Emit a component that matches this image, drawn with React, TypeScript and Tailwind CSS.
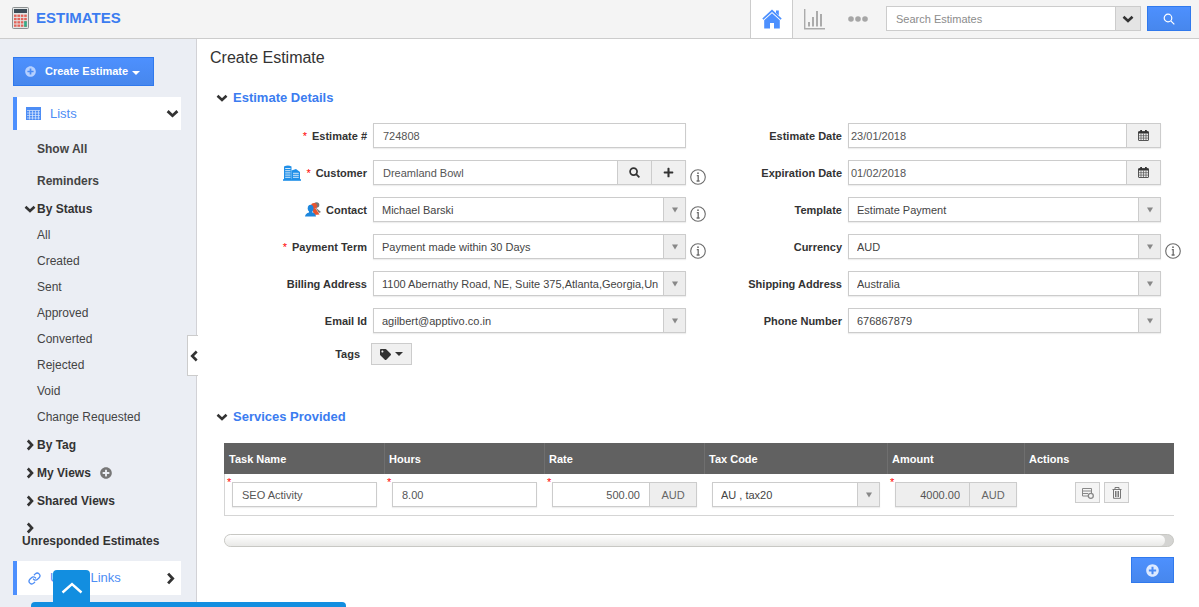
import type { ReactNode } from "react";
import { Link } from "lucide-react";
import { FaPlus, FaPlusCircle, FaTag } from "react-icons/fa";

type Direction = "up" | "down" | "left" | "right";

const CHEVRON_PATHS: Record<Direction, string> = {
  up: "M2 8 L6 4 L10 8",
  down: "M1.5 3.8 L6 8 L10.5 3.8",
  left: "M8.2 1.5 L4 6 L8.2 10.5",
  right: "M3.8 1.5 L8 6 L3.8 10.5",
};

const STATUSES = ["All", "Created", "Sent", "Approved", "Converted", "Rejected", "Void", "Change Requested"];

const BLUE_BUTTON = "border border-[#3079ed] bg-linear-to-b from-[#4d90fe] to-[#4787ed] text-white";

function Chevron({ dir, className = "size-3" }: { dir: Direction; className?: string }) {
  return (
    <svg viewBox="0 0 12 12" className={`shrink-0 ${className}`} fill="none" stroke="currentColor" strokeWidth="2.6">
      <path d={CHEVRON_PATHS[dir]} />
    </svg>
  );
}

function Caret({ className = "" }: { className?: string }) {
  return (
    <svg viewBox="0 0 8 4" className={`h-1 w-2 shrink-0 ${className}`} fill="currentColor">
      <path d="M0 0 H8 L4 4 Z" />
    </svg>
  );
}

function SearchIcon({ className, width }: { className: string; width: number }) {
  return (
    <svg viewBox="0 0 12 12" className={className} fill="none" stroke="currentColor" strokeWidth={width}>
      <circle cx="5" cy="5" r="3.8" />
      <path d="M7.8 7.8 L11.3 11.3" />
    </svg>
  );
}

function CalculatorIcon() {
  const cells = [0, 1, 2, 3];
  return (
    <svg viewBox="0 0 17 22" className="h-[22px] w-[17px]">
      <rect x="0.5" y="0.5" width="16" height="21" rx="1" fill="#e3e6e6" stroke="#8b8f90" />
      <rect x="2" y="2" width="13" height="4" fill="#3c4c57" />
      {cells.map((row) =>
        cells.map((col) => (
          <rect
            key={`${row}-${col}`}
            x={2 + col * 3.4}
            y={7.6 + row * 3.3}
            width="2.6"
            height="2.3"
            fill="#e2645a"
          />
        )),
      )}
      <rect x="12.2" y="14.2" width="2.6" height="5.6" fill="#2fb08a" />
    </svg>
  );
}

function HomeIcon() {
  return (
    <svg viewBox="0 0 20 20" className="size-5" fill="#4d90fe">
      <path d="M14 1.5 h2.8 v5 l-2.8 -2.6 z" />
      <path d="M10 0.6 L0.3 9.6 L1.4 10.7 L10 2.9 L18.6 10.7 L19.7 9.6 Z" />
      <path d="M10 4.2 L2.2 11.3 V19.4 H8 V14 H12 V19.4 H17.8 V11.3 Z" />
    </svg>
  );
}

function ChartIcon() {
  return (
    <svg viewBox="0 0 22 21" className="h-[21px] w-[22px]" fill="#ababab">
      <path d="M0 0 H1.4 V19 H21 V20.4 H0 Z" />
      <rect x="4" y="13" width="2" height="4.5" />
      <rect x="8" y="8" width="2" height="9.5" />
      <rect x="12" y="2" width="2" height="15.5" />
      <rect x="16" y="5" width="2" height="12.5" />
    </svg>
  );
}

function ListIcon() {
  return (
    <svg viewBox="0 0 15 13" className="h-[13px] w-[15px] shrink-0">
      <rect width="15" height="13" fill="#4d8df5" />
      <path
        d="M1 3.5H14M1 6H14M1 8.5H14M1 11H14M3.5 3.5V12.5M6.5 3.5V12.5M9.5 3.5V12.5M12.5 3.5V12.5"
        stroke="#dbe8fd"
        strokeWidth="0.7"
      />
    </svg>
  );
}

function CalendarIcon() {
  return (
    <svg viewBox="0 0 11 11" className="size-[11px]">
      <path d="M0.5 2 H10.5 V10 Q10.5 10.5 10 10.5 H1 Q0.5 10.5 0.5 10 Z" fill="#eee" stroke="#444" strokeWidth="0.9" />
      <path d="M0.5 1.2 H10.5 V3.5 H0.5 Z" fill="#333" />
      <path d="M2.2 0 H4 V2 H2.2 Z M7 0 H8.8 V2 H7 Z" fill="#333" />
      <path d="M0.5 5.7H10.5M0.5 8.1H10.5M3 3.5V10.5M5.5 3.5V10.5M8 3.5V10.5" stroke="#555" strokeWidth="0.7" />
    </svg>
  );
}

function BuildingIcon() {
  return (
    <svg viewBox="0 0 18 16" className="h-4 w-[18px]">
      <path d="M1 1.5 Q5 -0.5 8.5 1.5 V15 H1 Z" fill="#1f8fe8" />
      <path d="M8.5 5.5 L13 4 L17 7 V15 H8.5 Z" fill="#1f8fe8" />
      <path d="M0 15 H18" stroke="#1f8fe8" strokeWidth="1.6" />
      <path
        d="M2.2 3.5H7.5M2.2 5.7H7.5M2.2 7.9H7.5M2.2 10.1H7.5M2.2 12.3H7.5M10 8.3H15.8M10 10.3H15.8M10 12.3H15.8"
        stroke="#fff"
        strokeWidth="0.8"
      />
    </svg>
  );
}

function ContactIcon() {
  return (
    <svg viewBox="0 0 16 15" className="h-[15px] w-4">
      <circle cx="11.5" cy="3" r="2.8" fill="#777" />
      <path d="M10 5 L16 10 L14 11 Z" fill="#777" />
      <circle cx="9" cy="4" r="3" fill="#e8542f" />
      <path d="M7 6 L11 7 L14.5 12.5 L9 13 Z" fill="#e8542f" />
      <ellipse cx="5.6" cy="6.3" rx="2.9" ry="3.5" fill="#1c86dd" />
      <path d="M0 14.5 Q0.5 11.4 4 10.6 V9 H7.4 V10.6 Q10.6 11.4 11 14.5 Z" fill="#1c86dd" />
    </svg>
  );
}

function InfoButton({ about }: { about: string }) {
  return (
    <button type="button" aria-label={`About ${about}`} className="shrink-0">
      <svg viewBox="0 0 16 16" className="size-4" fill="none" stroke="#6b6b6b">
        <circle cx="8" cy="8" r="7.3" strokeWidth="1.1" />
        <path d="M6.8 6.7 H8.2 V12 M6.6 12 H9.6" strokeWidth="1.3" />
        <circle cx="8" cy="4.2" r="0.9" fill="#6b6b6b" stroke="none" />
      </svg>
    </button>
  );
}

interface FieldProps {
  id: string;
  label: string;
  required?: boolean;
  info?: boolean;
  icon?: ReactNode;
  children: ReactNode;
}

function Field({ id, label, required, info, icon, children }: FieldProps) {
  return (
    <div className="flex h-[25px] items-end">
      <div className="flex w-[136px] shrink-0 items-center justify-end gap-[5px] self-center whitespace-nowrap">
        {icon}
        {required && <span className="text-[11px] leading-4 text-[#f00]">*</span>}
        <label htmlFor={id} className="font-bold text-[#333]">
          {label}
        </label>
      </div>
      <div className="ml-1.5 mr-1 flex h-[25px] min-w-0 flex-1 border border-[#ccc] bg-white shadow-[0_1px_1px_#eee]">
        {children}
      </div>
      <div className="flex w-4 shrink-0">{info && <InfoButton about={label} />}</div>
    </div>
  );
}

function SelectBox({ id, value, label }: { id: string; value: string; label?: string }) {
  return (
    <div className="relative flex min-w-0 flex-1">
      <select
        id={id}
        aria-label={label}
        className="w-full min-w-0 appearance-none bg-transparent pl-2 pr-[22px] text-[#444] outline-none"
      >
        <option>{value}</option>
      </select>
      <span className="pointer-events-none absolute inset-y-0 right-0 flex w-[22px] items-center justify-center border-l border-[#ccc] bg-[#ededed]">
        <svg viewBox="0 0 6 6" className="size-1.5" fill="#888">
          <path d="M0 0.5 H6 L3 5.5 Z" />
        </svg>
      </span>
    </div>
  );
}

function TextInput({ id, value, className = "pl-[9px]" }: { id: string; value: string; className?: string }) {
  return (
    <input id={id} defaultValue={value} className={`w-full min-w-0 flex-1 text-[#555] outline-none ${className}`} />
  );
}

function AddonButton({ label, children }: { label: string; children: ReactNode }) {
  return (
    <button
      type="button"
      aria-label={label}
      className="flex w-[34px] shrink-0 items-center justify-center border-l border-[#ccc] bg-[#f0f0f0] text-[#333]"
    >
      {children}
    </button>
  );
}

function SectionHeading({ children }: { children: ReactNode }) {
  return (
    <h2 className="flex h-5 items-center gap-[5px] pl-[19px] text-[13px] font-bold text-[#3b7cf0]">
      <Chevron dir="down" className="size-3 text-[#333]" />
      {children}
    </h2>
  );
}

function Header() {
  return (
    <header className="flex h-[39px] items-start justify-between border-b border-[#ccc] bg-[#f4f4f4]">
      <div className="flex h-9 items-center gap-[7px] pl-3">
        <CalculatorIcon />
        <h1 className="text-[15px] font-bold text-[#3b7cf0]">ESTIMATES</h1>
      </div>
      <div className="flex h-full items-center pr-2">
        <a href="#home" aria-label="Home" className="flex h-full w-[43px] items-center justify-center border-x border-[#ccc] bg-white">
          <HomeIcon />
        </a>
        <a href="#reports" aria-label="Reports" className="ml-[11px]">
          <ChartIcon />
        </a>
        <button type="button" aria-label="More" className="ml-[22px] mr-[18px]">
          <svg viewBox="0 0 20 6" className="h-1.5 w-5" fill="#a6a6a6">
            <circle cx="3" cy="3" r="2.8" />
            <circle cx="10" cy="3" r="2.8" />
            <circle cx="17" cy="3" r="2.8" />
          </svg>
        </button>
        <form className="mt-1.5 flex h-[25px] self-start">
          <input
            aria-label="Search Estimates"
            placeholder="Search Estimates"
            className="w-[230px] border border-[#ccc] bg-white pl-[9px] outline-none placeholder:text-[#8c8c8c]"
          />
          <button
            type="button"
            aria-label="Search options"
            className="mr-1.5 flex w-[25px] items-center justify-center border border-l-0 border-[#ccc] bg-[#e4e4e4] text-[#333]"
          >
            <Chevron dir="down" />
          </button>
          <button type="submit" aria-label="Search" className={`flex w-11 items-center justify-center ${BLUE_BUTTON}`}>
            <SearchIcon className="size-3" width={1.2} />
          </button>
        </form>
      </div>
    </header>
  );
}

function TreeGroup({ label, dir = "right" }: { label: string; dir?: Direction }) {
  return (
    <a href="#group" className="flex h-7 items-center font-bold text-[#333]">
      <Chevron dir={dir} className="mr-px size-3" />
      {label}
    </a>
  );
}

function Sidebar() {
  return (
    <aside className="relative w-[197px] shrink-0 border-r border-[#d2d2d6] bg-[#ebeef4] pb-3 pl-[13px] pt-[18px] text-xs">
      <button type="button" className={`flex h-[29px] w-[141px] items-center text-[11px] font-bold ${BLUE_BUTTON}`}>
        <FaPlusCircle className="ml-[11px] mr-[9px] size-[11px] text-[#b5d0ff]" />
        Create Estimate
        <Caret className="ml-1 mt-0.5" />
      </button>

      <a
        href="#lists"
        className="mt-[11px] flex h-[33px] w-[168px] items-center border-l-4 border-[#4d90fe] bg-white pl-[9px] pr-0.5 text-[13px] text-[#4d8df5]"
      >
        <ListIcon />
        <span className="ml-[9px] flex-1">Lists</span>
        <Chevron dir="down" className="size-[13px] text-[#333]" />
      </a>

      <nav className="pl-[11px]">
        <a href="#all" className="mt-[3px] flex h-8 items-center pl-[13px] font-bold text-[#444]">
          Show All
        </a>
        <a href="#reminders" className="flex h-8 items-center pl-[13px] font-bold text-[#444]">
          Reminders
        </a>
        <div className="-mt-0.5">
          <TreeGroup label="By Status" dir="down" />
        </div>
        <ul className="-mt-px">
          {STATUSES.map((status) => (
            <li key={status}>
              <a href="#status" className="flex h-[26px] items-center pl-[13px] text-[#444]">
                {status}
              </a>
            </li>
          ))}
        </ul>
        <div className="mt-px">
          <TreeGroup label="By Tag" />
          <div className="flex items-center gap-[9px]">
            <TreeGroup label="My Views" />
            <button type="button" aria-label="Add view">
              <FaPlusCircle className="size-3 text-[#777]" />
            </button>
          </div>
          <TreeGroup label="Shared Views" />
        </div>
        <a href="#unresponded" className="-ml-0.5 mt-[7px] block font-bold leading-[14px] text-[#333]">
          <Chevron dir="right" className="ml-0.5 size-3" />
          Unresponded Estimates
        </a>
      </nav>

      <a
        href="#links"
        className="mt-[13px] flex h-[34px] w-[168px] items-center border-l-4 border-[#4d90fe] bg-white pl-[11px] pr-1 text-[13px] text-[#4d8df5]"
      >
        <Link className="size-[13px]" strokeWidth={2.4} />
        <span className="ml-[9px] flex-1">Useful Links</span>
        <Chevron dir="right" className="size-[13px] text-[#333]" />
      </a>

      <button
        type="button"
        aria-label="Collapse sidebar"
        className="absolute -right-0.5 top-[296px] flex h-[41px] w-[11px] items-center justify-end border border-r-0 border-[#ccc] bg-white text-[#333]"
      >
        <svg viewBox="0 0 8 12" className="h-3 w-2" fill="none" stroke="currentColor" strokeWidth="2.6">
          <path d="M6.7 1.5 L2.2 6 L6.7 10.5" />
        </svg>
      </button>
    </aside>
  );
}

function EstimateForm() {
  return (
    <div className="mt-[15px] grid grid-cols-2 pl-[21px]">
      <div className="flex flex-col gap-3">
        <Field id="number" label="Estimate #" required>
          <TextInput id="number" value="724808" />
        </Field>
        <Field id="customer" label="Customer" required info icon={<BuildingIcon />}>
          <TextInput id="customer" value="Dreamland Bowl" />
          <AddonButton label="Find customer">
            <SearchIcon className="size-[11px]" width={1.9} />
          </AddonButton>
          <AddonButton label="Add customer">
            <FaPlus className="size-[11px]" />
          </AddonButton>
        </Field>
        <Field id="contact" label="Contact" info icon={<ContactIcon />}>
          <SelectBox id="contact" value="Michael Barski" />
        </Field>
        <Field id="term" label="Payment Term" required info>
          <SelectBox id="term" value="Payment made within 30 Days" />
        </Field>
        <Field id="billing" label="Billing Address">
          <SelectBox id="billing" value="1100 Abernathy Road, NE, Suite 375,Atlanta,Georgia,Un" />
        </Field>
        <Field id="email" label="Email Id">
          <SelectBox id="email" value="agilbert@apptivo.co.in" />
        </Field>
        <div className="-mt-0.5 flex h-[22px] items-center">
          <label htmlFor="tags" className="w-[129px] text-right font-bold text-[#333]">
            Tags
          </label>
          <button
            id="tags"
            type="button"
            className="ml-[11px] flex h-[22px] w-[41px] items-center justify-center gap-1 border border-[#ccc] bg-[#f0f0f0] text-[#333]"
          >
            <FaTag className="size-[11px]" />
            <Caret />
          </button>
        </div>
      </div>

      <div className="flex flex-col gap-3">
        <Field id="date" label="Estimate Date">
          <TextInput id="date" value="23/01/2018" className="pl-0.5" />
          <AddonButton label="Pick estimate date">
            <CalendarIcon />
          </AddonButton>
        </Field>
        <Field id="expiry" label="Expiration Date">
          <TextInput id="expiry" value="01/02/2018" className="pl-0.5" />
          <AddonButton label="Pick expiration date">
            <CalendarIcon />
          </AddonButton>
        </Field>
        <Field id="template" label="Template">
          <SelectBox id="template" value="Estimate Payment" />
        </Field>
        <Field id="currency" label="Currency" info>
          <SelectBox id="currency" value="AUD" />
        </Field>
        <Field id="shipping" label="Shipping Address">
          <SelectBox id="shipping" value="Australia" />
        </Field>
        <Field id="phone" label="Phone Number">
          <SelectBox id="phone" value="676867879" />
        </Field>
      </div>
    </div>
  );
}

function ServiceCell({ label, required, children }: { label: string; required?: boolean; children: ReactNode }) {
  return (
    <td className="relative h-[41px] py-0 pl-2 pr-[7px]">
      {required && <span className="absolute left-[3px] top-0.5 leading-3 text-[#f00]">*</span>}
      <div role="group" aria-label={label} className="flex h-[25px] border border-[#ccc] shadow-[0_1px_1px_#eee]">
        {children}
      </div>
    </td>
  );
}

function CurrencySuffix() {
  return (
    <span className="flex w-[47px] shrink-0 items-center justify-center border-l border-[#ccc] bg-[#eee] text-[#666]">
      AUD
    </span>
  );
}

function RowAction({ label, children }: { label: string; children: ReactNode }) {
  return (
    <button
      type="button"
      aria-label={label}
      className="flex h-[21px] w-[25px] items-center justify-center border border-[#ccc] bg-[#f4f4f4]"
    >
      {children}
    </button>
  );
}

function ServicesTable() {
  const inputClass = "w-full min-w-0 flex-1 text-[#555] outline-none";
  return (
    <table className="w-full table-fixed border-separate border-spacing-0 border-b border-[#d5d5d5]">
      <thead>
        <tr className="h-[31px] bg-[#616161] text-left font-bold text-white">
          <th className="w-[160px] pl-[5px]">Task Name</th>
          <th className="w-[160px] border-l border-[#6f6f6f] pl-1">Hours</th>
          <th className="w-[160px] border-l border-[#6f6f6f] pl-1">Rate</th>
          <th className="w-[183px] border-l border-[#6f6f6f] pl-1">Tax Code</th>
          <th className="w-[137px] border-l border-[#6f6f6f] pl-1">Amount</th>
          <th className="border-l border-[#6f6f6f] pl-1">Actions</th>
        </tr>
      </thead>
      <tbody className="shadow-[inset_1px_0_0_#d5d5d5]">
        <tr>
          <ServiceCell label="Task Name" required>
            <input aria-label="Task Name" defaultValue="SEO Activity" className={`pl-[9px] ${inputClass}`} />
          </ServiceCell>
          <ServiceCell label="Hours" required>
            <input aria-label="Hours" defaultValue="8.00" className={`pl-[9px] ${inputClass}`} />
          </ServiceCell>
          <ServiceCell label="Rate" required>
            <input aria-label="Rate" defaultValue="500.00" className={`pr-[9px] text-right ${inputClass}`} />
            <CurrencySuffix />
          </ServiceCell>
          <ServiceCell label="Tax Code">
            <SelectBox id="tax" label="Tax Code" value="AU , tax20" />
          </ServiceCell>
          <ServiceCell label="Amount" required>
            <input
              aria-label="Amount"
              readOnly
              value="4000.00"
              className={`bg-[#eee] pr-[9px] text-right ${inputClass}`}
            />
            <CurrencySuffix />
          </ServiceCell>
          <td>
            <div className="-mt-1 flex justify-center gap-1 pl-1.5">
              <RowAction label="Add line">
                <svg viewBox="0 0 12 12" className="size-3" fill="none" stroke="#888">
                  <path d="M0.5 1.5H9.5V6M0.5 1.5V9H6M0.5 4H9.5M0.5 6.5H6" />
                  <circle cx="8.8" cy="8.8" r="2.5" fill="#f4f4f4" strokeWidth="1.3" />
                </svg>
              </RowAction>
              <RowAction label="Delete line">
                <svg viewBox="0 0 10 12" className="h-3 w-2.5" fill="none" stroke="#777">
                  <path d="M0.5 2.5H9.5M3 2V0.5H7V2M1.5 3V11.3H8.5V3M3.5 4V10M5 4V10M6.5 4V10" />
                </svg>
              </RowAction>
            </div>
          </td>
        </tr>
      </tbody>
    </table>
  );
}

export default function App() {
  return (
    <div className="flex min-h-screen flex-col bg-white font-['Liberation_Sans',Arial,sans-serif] text-[11px] leading-4">
      <Header />
      <div className="flex flex-1">
        <Sidebar />
        <main className="min-w-0 flex-1 pb-6 pr-[18px] pt-[7px]">
          <div className="pl-[13px]">
            <h2 className="text-[16px] leading-6 text-[#333]">Create Estimate</h2>
          </div>
          <div className="mt-[18px]">
            <SectionHeading>Estimate Details</SectionHeading>
            <div className="pl-[13px]">
              <EstimateForm />
            </div>
          </div>
          <div className="mt-[42px]">
            <SectionHeading>Services Provided</SectionHeading>
            <div className="mt-4 pl-[27px] pr-[7px]">
              <ServicesTable />
              <div className="mt-[18px] h-[13px] rounded-full border border-[#c8c8c4] bg-[#d4d4d2] pr-2">
                <div className="h-full rounded-full bg-linear-to-b from-white to-[#e9e9e7]" />
              </div>
              <div className="mt-2.5 flex justify-end">
                <button
                  type="button"
                  aria-label="Add service"
                  className={`flex h-[26px] w-[43px] items-center justify-center ${BLUE_BUTTON}`}
                >
                  <FaPlusCircle className="size-[13px] text-[#dce9ff]" />
                </button>
              </div>
            </div>
          </div>
        </main>
      </div>

      <div className="fixed bottom-0 left-[31px] w-[315px]">
        <button
          type="button"
          aria-label="Open chat"
          className="ml-[22px] flex h-8 w-[37px] items-center justify-center rounded-t bg-[#128ee0] pt-1 text-white"
        >
          <svg viewBox="0 0 22 12" className="h-3 w-[22px]" fill="none" stroke="currentColor" strokeWidth="2.4">
            <path d="M1.5 10.5 L11 2 L20.5 10.5" />
          </svg>
        </button>
        <div className="h-[5px] rounded-t bg-[#128ee0]" />
      </div>
    </div>
  );
}
